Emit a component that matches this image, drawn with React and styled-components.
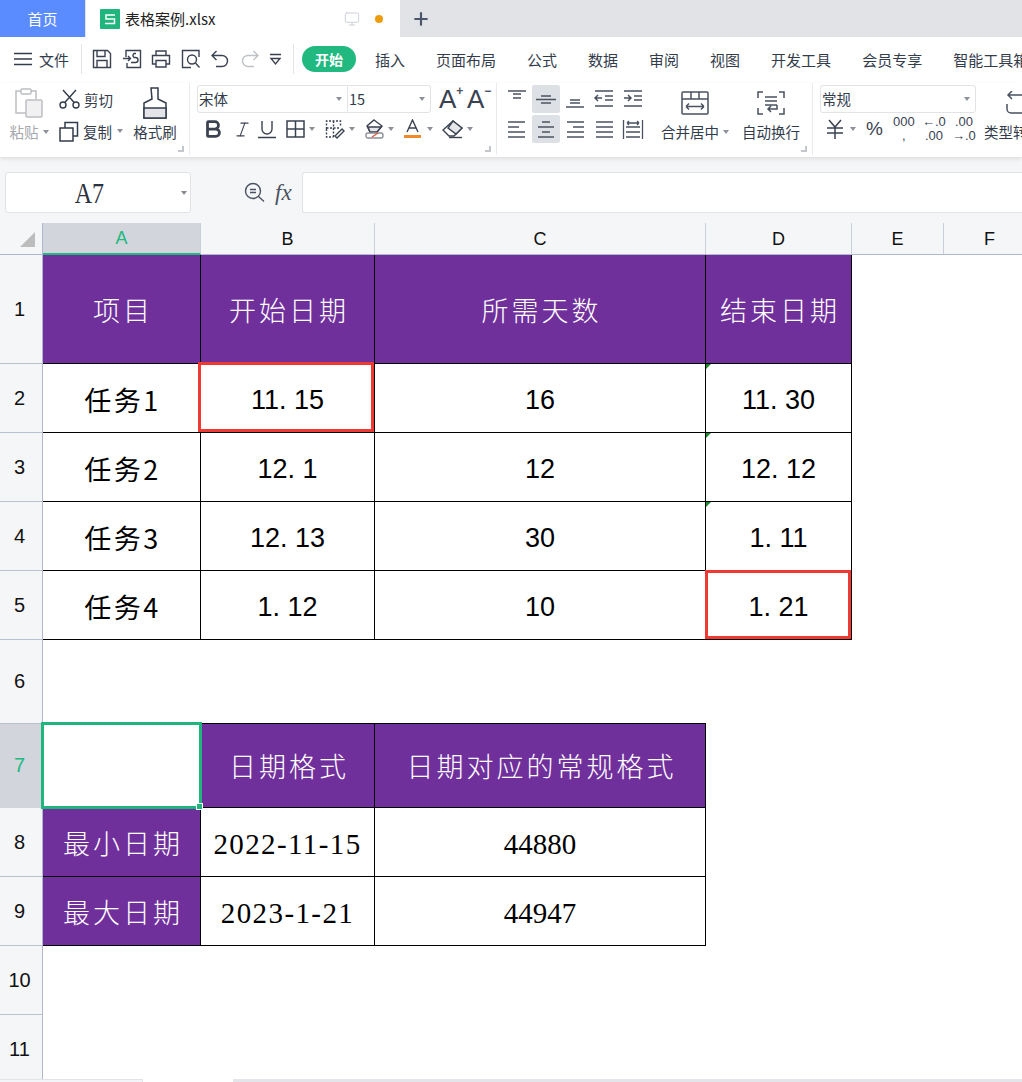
import React from "react";
import styled, { createGlobalStyle } from "styled-components";
import { Bold, Italic, Monitor, Plus } from "lucide-react";

const Global = createGlobalStyle`
  html, body { margin: 0; padding: 0; background: #fff; }
  body { width: 1022px; height: 1082px; overflow: hidden; font-family: "Liberation Sans", "Noto Sans CJK SC", sans-serif; color: #2c3340; }
`;
const UI = `"Noto Sans CJK SC", sans-serif`;
const Page = styled.div`width:1022px;height:1082px;display:flex;flex-direction:column;overflow:hidden;`;

const TabBar = styled.div`height:37px;flex:none;background:#e1e3e7;display:flex;align-items:stretch;`;
const HomeTab = styled.div`width:85px;background:#5b8cff;color:#fff;font:15px ${UI};display:flex;align-items:center;justify-content:center;`;
const DocTab = styled.div`margin-left:1px;width:314px;background:#fff;display:flex;align-items:center;padding-left:14px;box-sizing:border-box;font:15px ${UI};color:#222;`;
const DocName = styled.span`flex:1;margin-left:5px;`;
const Dot = styled.span`width:8px;height:8px;border-radius:50%;background:#ec9d0e;margin:0 17px 0 15px;`;
const AddTab = styled.div`margin-left:11px;display:flex;align-items:center;color:#4c566a;`;

const MenuBar = styled.div`height:46px;flex:none;box-sizing:border-box;padding:0 0 2px 14px;background:#fff;display:flex;align-items:center;font:15px ${UI};color:#333c4b;white-space:nowrap;overflow:hidden;`;
const FileLabel = styled.span`margin-left:7px;margin-right:12px;`;
const Sep = styled.span`width:1px;height:30px;flex:none;background:#e2e4e8;`;
const QuickIcons = styled.div`display:flex;align-items:center;gap:9.5px;padding:0 11px 0 10px;color:#3a4252;`;
const StartPill = styled.span`margin-left:8px;width:54px;height:26px;flex:none;border-radius:13px;background:#21b97f;color:#fff;font-weight:700;font-size:14px;display:flex;align-items:center;justify-content:center;`;
const MenuItem = styled.span`margin-left:${p => p.$gap ?? 31}px;`;

const Ribbon = styled.div`height:74px;flex:none;background:#fff;box-shadow:0 2px 4px rgba(0,0,0,.1);display:flex;position:relative;z-index:2;font:14.5px ${UI};color:#333c4b;overflow:hidden;`;
const Group = styled.div`width:${p => p.$w}px;flex:none;box-sizing:border-box;border-right:${p => p.$last ? 0 : "1px solid #e8eaed"};margin-bottom:2px;position:relative;display:flex;`;
const Corner = styled.span`position:absolute;right:5px;bottom:3px;width:4px;height:4px;border-right:2px solid #c3c7cd;border-bottom:2px solid #c3c7cd;`;
const Tall = styled.div`width:${p => p.$w}px;margin-left:${p => p.$ml || 0}px;flex:none;display:flex;flex-direction:column;align-items:center;color:${p => p.$muted ? "#a5a8ae" : "inherit"};`;
const TallIcon = styled.div`height:39px;display:flex;align-items:center;justify-content:center;padding-top:1px;box-sizing:border-box;`;
const TallLabel = styled.div`white-space:nowrap;display:flex;align-items:center;line-height:20px;`;
const SmallCol = styled.div`display:flex;flex-direction:column;gap:10px;padding-top:5px;margin-left:10px;width:74px;flex:none;`;
const SmallBtn = styled.div`display:flex;align-items:center;gap:4px;height:22px;white-space:nowrap;`;
const Caret = styled.span`display:inline-block;width:0;height:0;margin-left:${p => p.$ml ?? 4}px;border-left:3.5px solid transparent;border-right:3.5px solid transparent;border-top:4px solid #8b909a;flex:none;`;
const FontCol = styled.div`display:flex;flex-direction:column;margin-left:${p => p.$ml || 7}px;`;
const FieldRow = styled.div`display:flex;align-items:center;margin-top:2px;`;
const Field = styled.div`width:${p => p.$w}px;height:28px;box-sizing:border-box;border:1px solid #e1e3e7;border-radius:${p => p.$r || "3px"};border-left-width:${p => p.$nl ? 0 : "1px"};display:flex;align-items:center;justify-content:space-between;padding:0 5px 1px 1px;font-size:14.5px;color:#333c4b;`;
const GrowBtn = styled.span`display:inline-flex;align-items:flex-start;width:${p => p.$w}px;margin-left:${p => p.$ml}px;font:26px/26px "Liberation Sans";color:#3a4252;`;
const GrowSign = styled.span`font:bold 12px/10px "Liberation Sans";color:#4a5260;`;
const FormatRow = styled.div`display:flex;align-items:center;height:30px;margin-top:1px;margin-left:${p => p.$ml || 0}px;color:#3a4252;`;
const FormatCell = styled.span`display:inline-flex;align-items:center;width:${p => p.$w}px;flex:none;`;
const AlignGrid = styled.div`display:grid;grid-template-columns:repeat(5,28px);grid-template-rows:28px 28px;gap:2px 1px;margin:2px 0 0 6px;`;
const AlignBtn = styled.div`border-radius:2px;background:${p => p.$on ? "#dde1e5" : "transparent"};display:flex;align-items:center;justify-content:center;`;
const Percent = styled.span`font:19px "Liberation Sans";color:#3a4252;`;
const NumStack = styled.span`display:flex;flex-direction:column;align-items:center;font:13px/14px "Liberation Sans";color:#3a4252;`;

const FormulaArea = styled.div`height:66px;flex:none;background:#f5f6f8;display:flex;align-items:flex-start;padding:15px 0 0 5px;box-sizing:border-box;`;
const NameBox = styled.div`width:186px;height:41px;flex:none;box-sizing:border-box;background:#fff;border:1px solid #e1e3e7;border-radius:3px;display:flex;align-items:center;justify-content:center;color:#2b3240;position:relative;padding-right:18px;`;
const NameText = styled.span`font:30px "Liberation Serif",serif;transform:scaleX(.8);display:inline-block;`;
const NameCaret = styled.span`position:absolute;right:3px;top:18px;width:0;height:0;border-left:3px solid transparent;border-right:3px solid transparent;border-top:4px solid #858a94;`;
const Fx = styled.div`width:111px;flex:none;display:flex;align-items:center;height:41px;padding-left:53px;box-sizing:border-box;gap:10px;color:#4a5260;font:italic 23px "Liberation Serif",serif;`;
const FormulaInput = styled.div`flex:1;height:41px;box-sizing:border-box;background:#fff;border:1px solid #e1e3e7;border-right:0;border-radius:3px 0 0 3px;`;

const Sheet = styled.div`
  flex:none;height:856px;display:grid;background:#fff;position:relative;overflow:hidden;
  grid-template-columns:43px 158px 174px 331px 146px 92px 92px;
  grid-template-rows:32px 109px 69px 69px 69px 69px 84px 84px 69px 69px 69px 64px;
`;
const SheetCorner = styled.div`background:#f5f6f8;border-bottom:1px solid #aeb8cf;border-right:1px solid #aeb8cf;box-sizing:border-box;display:flex;align-items:flex-end;justify-content:flex-end;padding:0 7px 7px 0;`;
const Tri = styled.span`width:0;height:0;border-style:solid;border-width:0 0 15px 15px;border-color:transparent transparent #bdbdbd transparent;`;
const ColHead = styled.div`
  background:${p => p.$sel ? "#d2d5dc" : "#f5f6f8"};
  color:${p => p.$sel ? "#21b97f" : "#111"};
  border-right:1px solid #c9cfdc;
  border-bottom:${p => p.$sel ? "2px solid #21b97f" : "1px solid #aeb8cf"};
  box-sizing:border-box;font:18px "Liberation Sans";display:flex;align-items:center;justify-content:center;padding-top:1px;
`;
const RowHead = styled.div`
  background:${p => p.$sel ? "#d2d5dc" : "#f5f6f8"};
  color:${p => p.$sel ? "#21b97f" : "#111"};
  border-right:1px solid #aeb8cf;border-bottom:${p => p.$sel ? "1px solid #d2d5dc" : p.$end ? "0" : "1px solid #b9c1d3"};
  box-sizing:border-box;font:20px "Liberation Sans";display:flex;align-items:center;justify-content:center;
  padding-right:3px;padding-top:${p => p.$end ? 4 : 0}px;
`;
const Cell = styled.div`
  box-sizing:border-box;position:relative;display:flex;align-items:center;justify-content:center;white-space:nowrap;
  background:${p => p.$head ? "#70309c" : "#fff"};
  color:${p => p.$head ? "#fff" : "#000"};
  border-right:${p => p.$b ? "1px solid #000" : "0"};
  border-bottom:${p => (p.$b || p.$bb) ? "1px solid #000" : "0"};
  padding-top:${p => p.$pt ?? 2}px;
`;
const CnHead = styled.span`font:27px ${UI};font-weight:300;letter-spacing:3px;padding-left:3px;`;
const CnTask = styled.span`font:27px "Noto Sans CJK SC",sans-serif;letter-spacing:2.5px;padding-left:2px;`;
const Num = styled.span`font:27px "Liberation Sans",sans-serif;padding-top:3px;`;
const SerifNum = styled.span`font:29px "Liberation Serif",serif;letter-spacing:${p => p.$date ? 1.4 : 0}px;`;
const RedBox = styled.span`position:absolute;left:${p => p.$l}px;top:${p => p.$t}px;right:0;bottom:0;border:3px solid #ee3a33;pointer-events:none;`;
const SelectBox = styled.span`position:absolute;left:-2px;top:-2px;right:-1px;bottom:-1px;border:3px solid #1eb67d;z-index:2;`;
const FillHandle = styled.span`position:absolute;right:-4px;bottom:-4px;width:7px;height:7px;background:#1eb67d;border:1px solid #fff;box-sizing:border-box;`;
const GreenTick = styled.span`position:absolute;left:0;top:0;width:0;height:0;border-style:solid;border-width:5px 5px 0 0;border-color:#1a8a2e transparent transparent transparent;`;

const SheetBar = styled.div`height:3px;flex:none;display:flex;background:#fff;`;
const BarA = styled.span`width:143px;background:#f3f4f7;border-top:1px solid #e1e3e7;border-right:1px solid #e1e3e7;box-sizing:border-box;`;
const BarB = styled.span`margin-left:90px;flex:1;background:#e4e5ea;`;

const S = ({ children, w = 20, h = 20, c = "#3a4252", sw = 1.4 }) => (
  <svg width={w} height={h} viewBox={`0 0 ${w} ${h}`} fill="none" stroke={c} strokeWidth={sw} style={{ flex: "none", display: "block" }}>{children}</svg>
);
const Lines = ({ rows }) => (
  <S w={22} h={22} c="#4a5260" sw={1.5}>{rows.map(([x1, x2, y], i) => <path key={i} d={`M${x1} ${y}H${x2}`} />)}</S>
);

const SaveIcon = () => <S><path d="M1.5 1.5h14l3 3v14h-17z" /><path d="M5 1.5v6h8v-6M5 18.5v-7h10v7" /></S>;
const ConvertIcon = () => <S><path d="M4 8V1.5h14.5v17H5V14M1 9.5h7M6 7l2.5 2.5L6 12M9 13.5h4.5a2.5 2.5 0 0 0 0-5H12a2.5 2.5 0 0 1 0-4h2" /></S>;
const PrintIcon = () => <S><path d="M5 6V2h10v4M5 15H1.5V6.5h17V15H15" /><path d="M5 11.5h10v6.5H5z" /></S>;
const PreviewIcon = () => <S><path d="M18 8V1.5H1.5v17H10" /><circle cx="11" cy="10.5" r="4.5" /><path d="M14.5 14l4 4.5" /></S>;
const UndoIcon = () => <S><path d="M2 6.5h10a5.5 5.5 0 0 1 0 11H6M6.5 2L2 6.5 6.5 11" /></S>;
const RedoIcon = () => <S c="#bfc2c7"><path d="M18 6.5H8a5.5 5.5 0 0 0 0 11h6M13.5 2L18 6.5 13.5 11" /></S>;
const MoreIcon = () => <S w={13} h={14}><path d="M1 2.5h11M2 6.5h9L6.5 12z" /></S>;

const ClipIcon = () => (
  <S w={30} h={30} c="#bcbfc4" sw={1.5}>
    <path d="M7 3H2v22h10" /><path d="M17 3h5v8" /><rect x="7" y="1" width="10" height="5" rx="1" />
    <rect x="12" y="12" width="16" height="17" rx="1" fill="#f1f1f2" />
  </S>
);
const ScissorsIcon = () => <S w={21} h={20} c="#333c4b"><circle cx="4" cy="16" r="3" /><circle cx="17" cy="16" r="3" /><path d="M5.8 13.5L17 1M15.2 13.5L4 1" /></S>;
const CopyIcon = () => <S w={20} h={21} c="#333c4b" sw={1.5}><path d="M6 8V1.5h12.5V15H14" /><path d="M1 7h13v13H1z" fill="#fff" /></S>;
const BrushIcon = () => (
  <S w={24} h={32} c="#333c4b" sw={1.5}>
    <path d="M8 1h7v11l8 4v15H1V16l8-4z" />
    <path d="M1 21h22v10H1z" fill="#e4e5e8" />
  </S>
);
const UnderlineIcon = () => <S w={20} h={20}><path d="M5 2v8a5 5 0 0 0 10 0V2M1 18.5h18" /></S>;
const TableIcon = () => <S w={19} h={20} sw={1.5}><path d="M1 2h17v16H1zM9.5 2v16M1 10h17" /></S>;
const BorderIcon = () => <S w={20} h={20}><path d="M1.5 10V2h14v6M1.5 10v8h7M1.5 9h14M8.5 2v16" strokeDasharray="2 1.5" /><path d="M10 17l7-7 2 2-7 7z" /></S>;
const FillIcon = () => <S w={19} h={20}><path d="M9 1l8 6-5 6H5L2 7z" /><path d="M3 8h13l-4 5H5z" fill="#e5e6e8" /><rect x="1" y="14" width="17" height="5" rx="2" stroke="#8b8f96" /><path d="M7 18l6-4" stroke="#e6543a" /></S>;
const ColorIcon = () => <S w={17} h={20}><path d="M3 13L8.5 1 14 13M5 9h7" /><path d="M0 17.5h17" stroke="#ef8a2a" strokeWidth="3" /></S>;
const EraserIcon = () => <S w={21} h={19}><path d="M11 1l9 7-8 8H7L1 10z" /><path d="M11 1l9 7-6 6-8-6z" fill="#e5e6e8" /><path d="M7 17.5h13" /></S>;
const OutIndent = () => <S w={22} h={22} c="#4a5260" sw={1.5}><path d="M2 3h18M12 8h8M12 12h8M2 18h18M9 10H2M5 7l-3 3 3 3" /></S>;
const InIndent = () => <S w={22} h={22} c="#4a5260" sw={1.5}><path d="M2 3h18M12 8h8M12 12h8M2 18h18M2 10h7M6 7l3 3-3 3" /></S>;
const DistIcon = () => <S w={22} h={22} c="#4a5260" sw={1.3}><path d="M1.5 2v19M20.5 2v19M4 9h14M4 14h14M4 19h14M5 5h12M5 5l2-2M5 5l2 2M17 5l-2-2M17 5l-2 2" /></S>;
const MergeIcon = () => <S w={28} h={24} c="#4a5260" sw={1.5}><rect x="1" y="1" width="26" height="22" rx="1" /><path d="M1 8h26M10 1v7M18 1v7M5 15.5h18M5 15.5l3-3M5 15.5l3 3M23 15.5l-3-3M23 15.5l-3 3" /></S>;
const WrapIcon = () => <S w={28} h={24} c="#4a5260" sw={1.5}><path d="M6 1H1v6M22 1h5v6M1 17v6h5M27 17v6h-5M8 6h12M8 10h12M8 14h12M20 14v4h-9M14 15l-3 3 3 3" /></S>;
const YenIcon = () => <S w={18} h={20} sw={1.5}><path d="M3 1l6 7 6-7M9 8v12M1 9h16M1 14h16" /></S>;
const TypeIcon = () => <S w={40} h={24} c="#4a5260" sw={1.5}><path d="M40 4H15M19 0l-4 4 4 4M14 13v5a4 4 0 0 0 4 4h22" /></S>;
const ZoomEq = () => <S w={21} h={21} c="#4a5260"><circle cx="9" cy="9" r="7.5" /><path d="M6 7.5h6M6 10.5h6M14.5 14.5l5.5 5" /></S>;
const LogoS = () => (
  <svg width="20" height="20" viewBox="0 0 20 20" style={{ flex: "none", display: "block" }}>
    <rect width="20" height="20" rx="1" fill="#1fb57c" />
    <path d="M15 6H6v4h8.5v4.5H5" fill="none" stroke="#fff" strokeWidth="1.5" />
  </svg>
);
const MenuIcon = () => <S w={18} h={14} c="#333c4b"><path d="M0 1.5h18M0 7h18M0 12.5h18" /></S>;

const columns = ["A", "B", "C", "D", "E", "F"];
const taskRows = [
  { n: 2, task: "任务1", start: "11. 15", days: "16", end: "11. 30", red: "B", tick: true },
  { n: 3, task: "任务2", start: "12. 1", days: "12", end: "12. 12", tick: true },
  { n: 4, task: "任务3", start: "12. 13", days: "30", end: "1. 11", tick: true },
  { n: 5, task: "任务4", start: "1. 12", days: "10", end: "1. 21", red: "D" },
];
const dateRows = [
  { n: 8, label: "最小日期", date: "2022-11-15", code: "44880" },
  { n: 9, label: "最大日期", date: "2023-1-21", code: "44947" },
];
const Blanks = ({ count }) => Array.from({ length: count }, (_, i) => <Cell key={i} />);

export default function App() {
  return (
    <Page>
      <Global />
      <TabBar>
        <HomeTab>首页</HomeTab>
        <DocTab>
          <LogoS />
          <DocName>表格案例.xlsx</DocName>
          <Monitor size={16} color="#c9ced8" strokeWidth={1.4} />
          <Dot />
        </DocTab>
        <AddTab><Plus size={20} strokeWidth={2.6} /></AddTab>
      </TabBar>

      <MenuBar>
        <MenuIcon />
        <FileLabel>文件</FileLabel>
        <Sep />
        <QuickIcons>
          <SaveIcon />
          <ConvertIcon />
          <PrintIcon />
          <PreviewIcon />
          <UndoIcon />
          <RedoIcon />
          <MoreIcon />
        </QuickIcons>
        <Sep />
        <StartPill>开始</StartPill>
        <MenuItem $gap={19}>插入</MenuItem>
        <MenuItem>页面布局</MenuItem>
        <MenuItem>公式</MenuItem>
        <MenuItem>数据</MenuItem>
        <MenuItem>审阅</MenuItem>
        <MenuItem>视图</MenuItem>
        <MenuItem>开发工具</MenuItem>
        <MenuItem>会员专享</MenuItem>
        <MenuItem>智能工具箱</MenuItem>
      </MenuBar>

      <Ribbon>
        <Group $w={190}>
          <Tall $w={40} $ml={9} $muted>
            <TallIcon><ClipIcon /></TallIcon>
            <TallLabel>粘贴<Caret /></TallLabel>
          </Tall>
          <SmallCol>
            <SmallBtn><ScissorsIcon />剪切</SmallBtn>
            <SmallBtn><CopyIcon />复制<Caret $ml={1} /></SmallBtn>
          </SmallCol>
          <Tall $w={44}>
            <TallIcon><BrushIcon /></TallIcon>
            <TallLabel>格式刷</TallLabel>
          </Tall>
          <Corner />
        </Group>
        <Group $w={307}>
          <FontCol>
            <FieldRow>
              <Field $w={151} $r="3px 0 0 3px">宋体<Caret /></Field>
              <Field $w={83} $r="0 3px 3px 0" $nl>15<Caret /></Field>
              <GrowBtn $w={28} $ml={8}>A<GrowSign>+</GrowSign></GrowBtn>
              <GrowBtn $w={24} $ml={0}>A<GrowSign>−</GrowSign></GrowBtn>
            </FieldRow>
            <FormatRow $ml={5}>
              <FormatCell $w={31}><Bold size={22} strokeWidth={3} /></FormatCell>
              <FormatCell $w={24}><Italic size={19} strokeWidth={1.4} /></FormatCell>
              <FormatCell $w={29}><UnderlineIcon /></FormatCell>
              <FormatCell $w={39}><TableIcon /><Caret /></FormatCell>
              <FormatCell $w={40}><BorderIcon /><Caret /></FormatCell>
              <FormatCell $w={39}><FillIcon /><Caret /></FormatCell>
              <FormatCell $w={38}><ColorIcon /><Caret $ml={6} /></FormatCell>
              <FormatCell $w={32}><EraserIcon /><Caret /></FormatCell>
            </FormatRow>
          </FontCol>
          <Corner />
        </Group>
        <Group $w={316}>
          <AlignGrid>
            <AlignBtn><Lines rows={[[2, 20, 3], [7, 15, 6], [7, 15, 10]]} /></AlignBtn>
            <AlignBtn $on><Lines rows={[[6, 16, 8], [1, 21, 11.5], [6, 16, 15]]} /></AlignBtn>
            <AlignBtn><Lines rows={[[6, 16, 12], [6, 16, 15], [2, 20, 19]]} /></AlignBtn>
            <AlignBtn><OutIndent /></AlignBtn>
            <AlignBtn><InIndent /></AlignBtn>
            <AlignBtn><Lines rows={[[2, 19, 4], [2, 13, 9], [2, 19, 14], [2, 19, 19]]} /></AlignBtn>
            <AlignBtn $on><Lines rows={[[7, 15, 4], [3, 19, 9], [7, 15, 14], [3, 19, 19]]} /></AlignBtn>
            <AlignBtn><Lines rows={[[3, 20, 4], [9, 20, 9], [3, 20, 14], [3, 20, 19]]} /></AlignBtn>
            <AlignBtn><Lines rows={[[3, 20, 4], [3, 20, 9], [3, 20, 14], [3, 20, 19]]} /></AlignBtn>
            <AlignBtn><DistIcon /></AlignBtn>
          </AlignGrid>
          <Tall $w={80} $ml={8}>
            <TallIcon><MergeIcon /></TallIcon>
            <TallLabel>合并居中<Caret /></TallLabel>
          </Tall>
          <Tall $w={72}>
            <TallIcon><WrapIcon /></TallIcon>
            <TallLabel>自动换行</TallLabel>
          </Tall>
          <Corner />
        </Group>
        <Group $w={230} $last>
          <FontCol>
            <FieldRow><Field $w={156}>常规<Caret /></Field></FieldRow>
            <FormatRow $ml={6}>
              <FormatCell $w={40}><YenIcon /><Caret $ml={6} /></FormatCell>
              <FormatCell $w={27}><Percent>%</Percent></FormatCell>
              <FormatCell $w={29}><NumStack><span>000</span><span>,</span></NumStack></FormatCell>
              <FormatCell $w={30}><NumStack><span>←.0</span><span>.00</span></NumStack></FormatCell>
              <FormatCell $w={24}><NumStack><span>.00</span><span>→.0</span></NumStack></FormatCell>
            </FormatRow>
          </FontCol>
          <Tall $w={60} $ml={7}>
            <TallIcon><TypeIcon /></TallIcon>
            <TallLabel>类型转换</TallLabel>
          </Tall>
        </Group>
      </Ribbon>

      <FormulaArea>
        <NameBox><NameText>A7</NameText><NameCaret /></NameBox>
        <Fx><ZoomEq />fx</Fx>
        <FormulaInput />
      </FormulaArea>

      <Sheet>
        <SheetCorner><Tri /></SheetCorner>
        {columns.map(c => <ColHead key={c} $sel={c === "A"}>{c}</ColHead>)}

        <RowHead>1</RowHead>
        {["项目", "开始日期", "所需天数", "结束日期"].map(t => (
          <Cell key={t} $head $b $pt={1}><CnHead>{t}</CnHead></Cell>
        ))}
        <Blanks count={2} />

        {taskRows.map(r => (
          <React.Fragment key={r.n}>
            <RowHead>{r.n}</RowHead>
            <Cell $b><CnTask>{r.task}</CnTask></Cell>
            <Cell $b>
              <Num>{r.start}</Num>
              {r.red === "B" && <RedBox $l={-3} $t={-2} />}
            </Cell>
            <Cell $b><Num>{r.days}</Num></Cell>
            <Cell $b>
              {r.tick && <GreenTick />}
              <Num>{r.end}</Num>
              {r.red === "D" && <RedBox $l={-1} $t={-1} />}
            </Cell>
            <Blanks count={2} />
          </React.Fragment>
        ))}

        <RowHead>6</RowHead>
        <Cell />
        <Cell $bb />
        <Cell $bb />
        <Blanks count={3} />

        <RowHead $sel>7</RowHead>
        <Cell><SelectBox><FillHandle /></SelectBox></Cell>
        <Cell $head $b $pt={0}><CnHead>日期格式</CnHead></Cell>
        <Cell $head $b $pt={0}><CnHead>日期对应的常规格式</CnHead></Cell>
        <Blanks count={3} />

        {dateRows.map(r => (
          <React.Fragment key={r.n}>
            <RowHead>{r.n}</RowHead>
            <Cell $head $b $pt={1}><CnHead>{r.label}</CnHead></Cell>
            <Cell $b $pt={4}><SerifNum $date>{r.date}</SerifNum></Cell>
            <Cell $b $pt={4}><SerifNum>{r.code}</SerifNum></Cell>
            <Blanks count={3} />
          </React.Fragment>
        ))}

        <RowHead>10</RowHead>
        <Blanks count={6} />
        <RowHead $end>11</RowHead>
        <Blanks count={6} />
      </Sheet>
      <SheetBar><BarA /><BarB /></SheetBar>
    </Page>
  );
}
